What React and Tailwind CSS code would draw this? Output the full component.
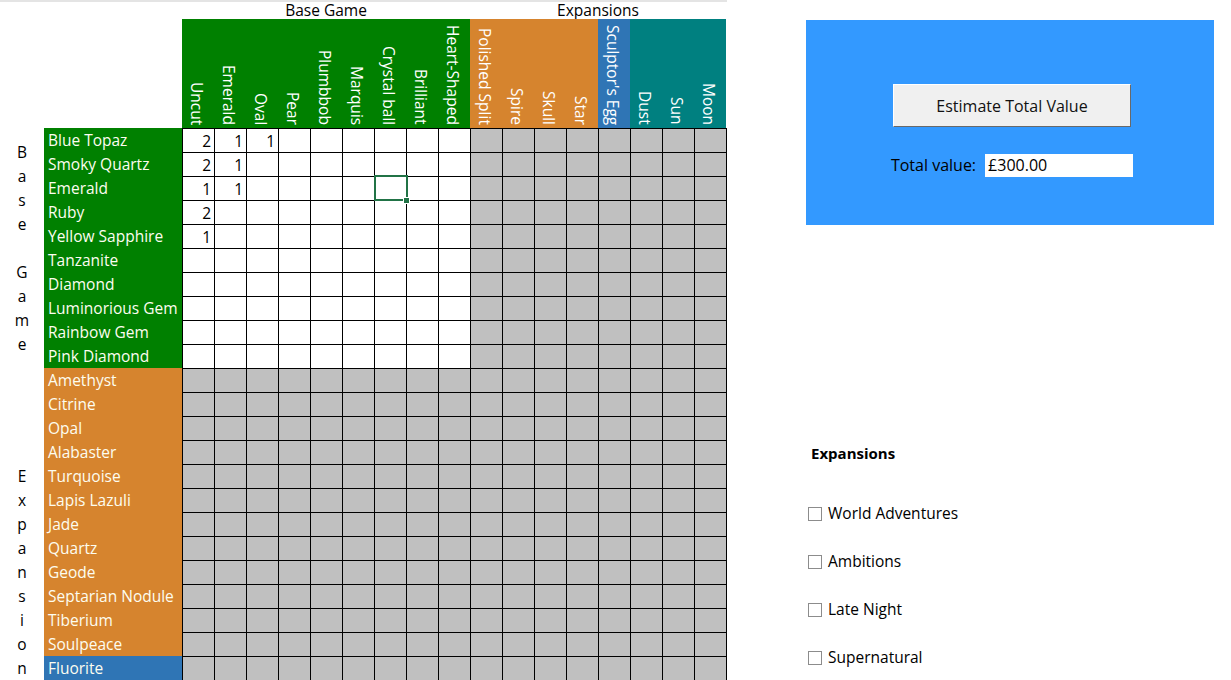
import React from "react";

const columns = [
  { name: "Uncut", bg: "bg-[#008000]" },
  { name: "Emerald", bg: "bg-[#008000]" },
  { name: "Oval", bg: "bg-[#008000]" },
  { name: "Pear", bg: "bg-[#008000]" },
  { name: "Plumbbob", bg: "bg-[#008000]" },
  { name: "Marquis", bg: "bg-[#008000]" },
  { name: "Crystal ball", bg: "bg-[#008000]" },
  { name: "Brilliant", bg: "bg-[#008000]" },
  { name: "Heart-Shaped", bg: "bg-[#008000]" },
  { name: "Polished Split", bg: "bg-[#d6842e]" },
  { name: "Spire", bg: "bg-[#d6842e]" },
  { name: "Skull", bg: "bg-[#d6842e]" },
  { name: "Star", bg: "bg-[#d6842e]" },
  { name: "Sculptor's Egg", bg: "bg-[#2f75b5]" },
  { name: "Dust", bg: "bg-[#008080]" },
  { name: "Sun", bg: "bg-[#008080]" },
  { name: "Moon", bg: "bg-[#008080]" },
];

const gems = [
  { name: "Blue Topaz", bg: "bg-[#008000]", base: true, vals: [2, 1, 1] },
  { name: "Smoky Quartz", bg: "bg-[#008000]", base: true, vals: [2, 1] },
  { name: "Emerald", bg: "bg-[#008000]", base: true, vals: [1, 1] },
  { name: "Ruby", bg: "bg-[#008000]", base: true, vals: [2] },
  { name: "Yellow Sapphire", bg: "bg-[#008000]", base: true, vals: [1] },
  { name: "Tanzanite", bg: "bg-[#008000]", base: true, vals: [] },
  { name: "Diamond", bg: "bg-[#008000]", base: true, vals: [] },
  { name: "Luminorious Gem", bg: "bg-[#008000]", base: true, vals: [] },
  { name: "Rainbow Gem", bg: "bg-[#008000]", base: true, vals: [] },
  { name: "Pink Diamond", bg: "bg-[#008000]", base: true, vals: [] },
  { name: "Amethyst", bg: "bg-[#d6842e]" },
  { name: "Citrine", bg: "bg-[#d6842e]" },
  { name: "Opal", bg: "bg-[#d6842e]" },
  { name: "Alabaster", bg: "bg-[#d6842e]" },
  { name: "Turquoise", bg: "bg-[#d6842e]" },
  { name: "Lapis Lazuli", bg: "bg-[#d6842e]" },
  { name: "Jade", bg: "bg-[#d6842e]" },
  { name: "Quartz", bg: "bg-[#d6842e]" },
  { name: "Geode", bg: "bg-[#d6842e]" },
  { name: "Septarian Nodule", bg: "bg-[#d6842e]" },
  { name: "Tiberium", bg: "bg-[#d6842e]" },
  { name: "Soulpeace", bg: "bg-[#d6842e]" },
  { name: "Fluorite", bg: "bg-[#2f75b5]" },
];

const expansions = ["World Adventures", "Ambitions", "Late Night", "Supernatural"];

function Cell({ row, col, value }) {
  const white = row.base && col < 9;
  const selected = row.name === "Emerald" && col === 6;
  return (
    <div
      className={`relative h-[24px] border-l border-t border-black text-right pr-[3px] leading-[24px] ${
        white ? "bg-white" : "bg-[#c0c0c0]"
      }`}
    >
      {value}
      {selected && (
        <>
          <div className="absolute z-10 left-[-1px] top-[-2px] w-[34px] h-[26px] border-2 border-[#217346]" />
          <div className="absolute z-10 right-[-4px] bottom-[-4px] w-[7px] h-[7px] bg-[#217346] border border-white" />
        </>
      )}
    </div>
  );
}

export default function App() {
  return (
    <div className="flex w-[1231px] h-[680px] overflow-hidden bg-white text-[15.5px] text-black font-['Open_Sans',sans-serif]">
      <div className="flex flex-col w-[727px] shrink-0">
        <div className="flex h-[19px] pl-[182px] border-t-2 border-[#e4e4e4] leading-[17px]">
          <div className="w-[288px] text-center">Base Game</div>
          <div className="w-[256px] text-center">Expansions</div>
        </div>
        <div className="flex h-[109px] pl-[182px]">
          {columns.map((c) => (
            <div key={c.name} className={`w-[32px] flex items-end pl-[4px] pb-[3px] text-white ${c.bg}`}>
              <span className="[writing-mode:vertical-rl] whitespace-nowrap leading-[21px]">{c.name}</span>
            </div>
          ))}
        </div>
        <div className="flex">
          <div className="w-[44px] flex flex-col items-center pt-[12px]">
            {["B", "a", "s", "e", "", "G", "a", "m", "e"].map((l, i) => (
              <div key={"b" + i} className="h-[24px] leading-[24px]">{l}</div>
            ))}
            <div className="h-[108px]" />
            {["E", "x", "p", "a", "n", "s", "i", "o", "n"].map((l, i) => (
              <div key={"e" + i} className="h-[24px] leading-[24px]">{l}</div>
            ))}
          </div>
          <div className="w-[138px] flex flex-col">
            {gems.map((g) => (
              <div key={g.name} className={`h-[24px] leading-[25px] pl-[4px] text-[#fdfdf0] whitespace-nowrap ${g.bg}`}>
                {g.name}
              </div>
            ))}
          </div>
          <div className="grid grid-cols-[repeat(17,32px)] border-r border-black">
            {gems.map((g) =>
              columns.map((c, ci) => (
                <Cell key={g.name + c.name} row={g} col={ci} value={g.vals ? g.vals[ci] : undefined} />
              ))
            )}
          </div>
        </div>
      </div>

      <div className="flex flex-col ml-[79px] w-[408px] shrink-0">
        <div className="mt-[20px] h-[205px] bg-[#3399ff] flex flex-col items-center pt-[64px]">
          <button className="w-[238px] h-[43px] bg-[#f0f0f0] border border-t-white border-l-white border-r-[#696969] border-b-[#696969] text-[16px] text-[#111] ml-[4px]">
            Estimate Total Value
          </button>
          <div className="flex items-center mt-[26px] ml-[4px]">
            <span className="text-[16px] mr-[9px]">Total value:</span>
            <div className="w-[148px] h-[23px] bg-white pl-[3px] leading-[23px] text-[16px]">£300.00</div>
          </div>
        </div>
        <div className="mt-[218px] pl-[5px] font-bold text-[15px] leading-[20px]">Expansions</div>
        <div className="flex flex-col mt-[41px] gap-[28px]">
          {expansions.map((e) => (
            <div key={e} className="flex items-center h-[20px] pl-[2px]">
              <div className="w-[14px] h-[14px] border border-[#8c8c8c] bg-white mr-[6px]" />
              <span className="text-[15.5px]">{e}</span>
            </div>
          ))}
        </div>
      </div>
    </div>
  );
}
